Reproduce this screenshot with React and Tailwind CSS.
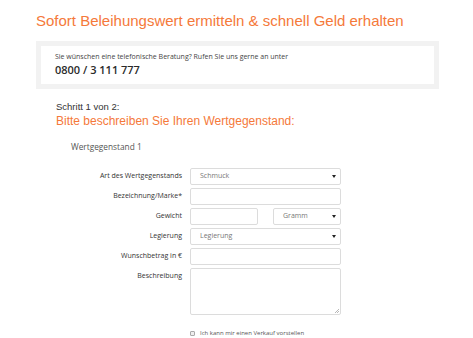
const label = "text-[7px] text-[#333] text-right w-[154px] shrink-0 pr-[8px]";
const field = "h-[17px] border border-[#dcdcdc] rounded-[2px] bg-white";

function Arrow() {
  return (
    <svg width="4" height="3" viewBox="0 0 4 3" className="absolute right-[4px] top-[6px]">
      <polygon points="0,0 4,0 2,3" fill="#222" />
    </svg>
  );
}

function Select({ value, className }) {
  return (
    <div className={`relative ${field} ${className} flex items-center pl-[9px] text-[7px] text-[#777]`}>
      {value}
      <Arrow />
    </div>
  );
}

function Row({ name, children, mt = "mt-[3px]" }) {
  return (
    <div className={`flex items-center ${mt}`}>
      <div className={label}>{name}</div>
      {children}
    </div>
  );
}

export default function App() {
  return (
    <div className="w-[473px] h-[338px] bg-white overflow-hidden font-['Open_Sans',sans-serif]">
      <div className="ml-[36px] w-[403px] pt-[11px]">
        <h1 className="font-['Liberation_Sans',Arial,sans-serif] text-[15px] leading-[20px] text-[#f5793a]">
          Sofort Beleihungswert ermitteln &amp; schnell Geld erhalten
        </h1>
        <div className="mt-[10px] h-[48px] border-[5px] border-[#f2f2f2] bg-white pl-[14px] pt-[6px]">
          <p className="text-[7px] leading-[10px] text-[#444]">
            Sie wünschen eine telefonische Beratung? Rufen Sie uns gerne an unter
          </p>
          <p className="text-[11px] leading-[16px] font-semibold text-[#2a2a2a]">0800 / 3 111 777</p>
        </div>

        <div className="pl-[20px] mt-[12px] font-['Liberation_Sans',Arial,sans-serif]">
          <p className="text-[9.5px] leading-[12px] text-[#333]">Schritt 1 von 2:</p>
          <p className="text-[12px] leading-[16px] text-[#f5793a]">Bitte beschreiben Sie Ihren Wertgegenstand:</p>
        </div>
        <p className="ml-[35px] mt-[12px] text-[8.3px] leading-[12px] text-[#555]">Wertgegenstand 1</p>

        <div className="mt-[15px]">
          <Row name="Art des Wertgegenstands" mt="mt-0">
            <Select value="Schmuck" className="w-[151px]" />
          </Row>
          <Row name="Bezeichnung/Marke*">
            <div className={`${field} w-[151px]`} />
          </Row>
          <Row name="Gewicht">
            <div className={`${field} w-[68px]`} />
            <Select value="Gramm" className="w-[68px] ml-[15px]" />
          </Row>
          <Row name="Legierung">
            <Select value="Legierung" className="w-[151px]" />
          </Row>
          <Row name="Wunschbetrag in €">
            <div className={`${field} w-[151px]`} />
          </Row>
          <div className="flex items-start mt-[3px]">
            <div className={`${label} pt-[3px]`}>Beschreibung</div>
            <div className="relative w-[151px] h-[47px] border border-[#dcdcdc] rounded-[2px]">
              <svg width="5" height="5" viewBox="0 0 5 5" className="absolute right-[1px] bottom-[1px]">
                <path d="M5 1 L1 5 M5 3 L3 5" stroke="#999" strokeWidth="0.7" />
              </svg>
            </div>
          </div>
          <div className="flex items-center ml-[154px] mt-[14px]">
            <div className="w-[5px] h-[5px] border border-[#aaa] rounded-[1px] bg-[#eee]" />
            <span className="ml-[5px] text-[6px] leading-[8px] text-[#555]">Ich kann mir einen Verkauf vorstellen</span>
          </div>
        </div>
      </div>
    </div>
  );
}
